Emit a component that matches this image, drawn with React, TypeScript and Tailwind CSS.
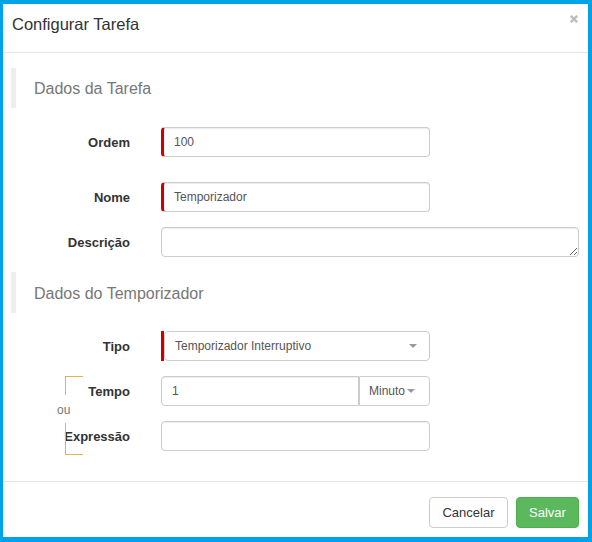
import React from "react";

const Caret = () => (
  <svg width="8" height="4" viewBox="0 0 8 4" className="shrink-0">
    <path d="M0 0 L8 0 L4 4 Z" fill="#999" />
  </svg>
);

const Label = ({ children }: { children: React.ReactNode }) => (
  <div className="w-[127px] h-[30px] shrink-0 text-right text-[13px] font-bold text-[#333] leading-[32px]">
    {children}
  </div>
);

const inputBase =
  "h-[30px] bg-white border border-[#ccc] rounded-[4px] text-[12px] text-[#555] pl-[10px] outline-none shadow-[inset_0_1px_1px_rgba(0,0,0,0.075)]";

const Section = ({ title, h }: { title: string; h: string }) => (
  <div className={`ml-[8px] border-l-[5px] border-[#eee] pl-[18px] pt-[2px] flex items-center text-[16px] text-[#777] ${h}`}>
    {title}
  </div>
);

export default function App() {
  return (
    <div
      className="w-[592px] h-[542px] bg-white border-l-[3px] border-t-[4px] border-r-[4px] border-b-[5px] border-[#00a2e8] flex flex-col"
      style={{ fontFamily: '"Liberation Sans", Arial, sans-serif' }}
    >
      {/* header */}
      <div className="h-[49px] shrink-0 border-b border-[#e5e5e5] flex items-start justify-between pl-[9px] pr-[10px] pt-[10px]">
        <div className="text-[16.5px] leading-[20px] text-[#333]">Configurar Tarefa</div>
        <svg width="8" height="8" viewBox="0 0 8 8" className="mt-[1px]">
          <path d="M0.8 0.8 L7.2 7.2 M7.2 0.8 L0.8 7.2" stroke="#bdbdbd" strokeWidth="2.4" />
        </svg>
      </div>

      {/* body */}
      <div className="flex-1 flex flex-col">
        <div className="mt-[15px]">
          <Section title="Dados da Tarefa" h="h-[40px]" />
        </div>

        <div className="mt-[19px] flex items-center">
          <Label>Ordem</Label>
          <input
            readOnly
            defaultValue="100"
            className={`${inputBase} ml-[31px] w-[269px] border-l-[3px] border-l-[#cc0000]`}
          />
        </div>

        <div className="mt-[25px] flex items-center">
          <Label>Nome</Label>
          <input
            readOnly
            defaultValue="Temporizador"
            className={`${inputBase} ml-[31px] w-[269px] border-l-[3px] border-l-[#cc0000]`}
          />
        </div>

        <div className="mt-[15px] flex items-start">
          <Label>Descrição</Label>
          <textarea
            readOnly
            className={`${inputBase} ml-[31px] w-[418px] h-[30px] min-h-[30px] block`}
          />
        </div>

        <div className="mt-[15px]">
          <Section title="Dados do Temporizador" h="h-[41px]" />
        </div>

        <div className="mt-[18px] flex items-center">
          <Label>Tipo</Label>
          <div className="ml-[31px] w-[3px] h-[30px] bg-[#cc0000]" />
          <div className="w-[266px] h-[30px] border border-[#ccc] rounded-[4px] flex items-center justify-between pl-[10px] pr-[12px] text-[12px] text-[#555]">
            <span>Temporizador Interruptivo</span>
            <Caret />
          </div>
        </div>

        <div className="relative mt-[15px]">
          <div className="absolute left-[62px] top-0 w-[18px] h-[19px] border-l border-t border-[#f0ad4e]" />
          <div className="absolute left-[54px] top-[27px] text-[12px] leading-[14px] text-[#777]">ou</div>
          <div className="absolute left-[62px] top-[47px] w-[18px] h-[32px] border-l border-b border-[#f0ad4e]" />

          <div className="flex items-center">
            <Label>Tempo</Label>
            <input
              readOnly
              defaultValue="1"
              className={`${inputBase} ml-[31px] w-[198px] rounded-r-none`}
            />
            <div className="w-[71px] h-[30px] border border-[#ccc] rounded-r-[4px] flex items-center pl-[9px] gap-[2px] text-[12px] text-[#555] bg-white">
              <span>Minuto</span>
              <Caret />
            </div>
          </div>

          <div className="mt-[15px] flex items-center">
            <Label>Expressão</Label>
            <input readOnly defaultValue="" className={`${inputBase} ml-[31px] w-[269px]`} />
          </div>
        </div>
      </div>

      {/* footer */}
      <div className="h-[56px] shrink-0 border-t border-[#e5e5e5] flex items-start justify-end pt-[15px] pr-[9px] gap-[8px]">
        <button className="w-[79px] h-[31px] border border-[#ccc] rounded-[4px] bg-white text-[13px] text-[#333]">
          Cancelar
        </button>
        <button className="w-[63px] h-[31px] border border-[#4cae4c] rounded-[4px] bg-[#5cb85c] text-[13px] text-white">
          Salvar
        </button>
      </div>
    </div>
  );
}
